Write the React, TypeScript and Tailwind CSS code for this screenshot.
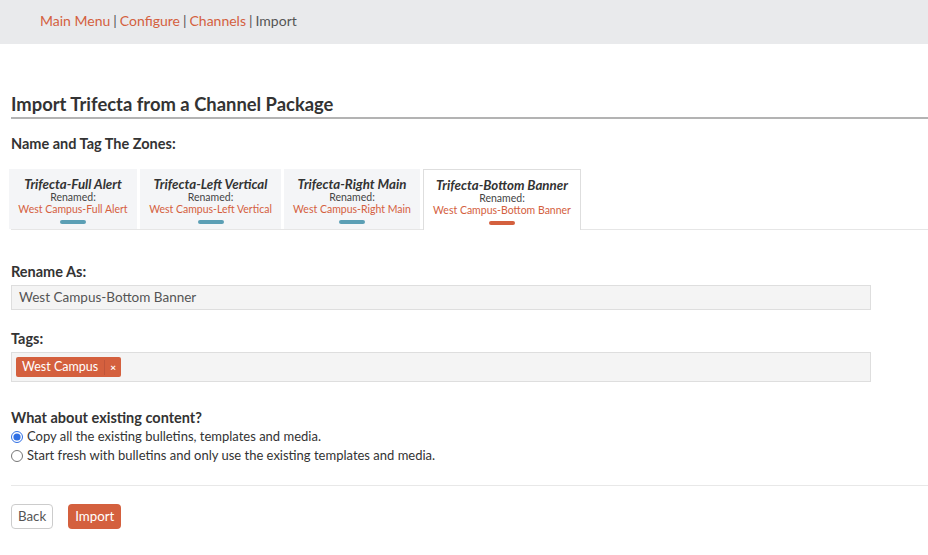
import React from "react";

const orange = "text-[#d4603e]";

function Tab({ title, renamed, active }: { title: string; renamed: string; active?: boolean }) {
  return (
    <div
      className={
        "flex flex-col items-center pt-[8px] px-[4px] whitespace-nowrap " +
        (active ? "bg-white border border-[#dedede] border-b-0 mb-[-1px] h-[61px]" : "bg-[#f4f5f7] h-[60px]")
      }
    >
      <div className="text-[13.3px] font-bold italic text-[#333] leading-[15px]">{title}</div>
      <div className="text-[10.5px] text-[#444] leading-[11px]">Renamed:</div>
      <div className={"text-[10.5px] leading-[12px] " + orange}>{renamed}</div>
      <div className={"mt-[5px] w-[26px] h-[4px] rounded-full " + (active ? "bg-[#d4603e]" : "bg-[#5b9fb5]")} />
    </div>
  );
}

export default function App() {
  return (
    <div className="w-[928px] h-[555px] bg-white text-[#333] overflow-hidden" style={{ fontFamily: "Lato, 'Open Sans', sans-serif" }}>
      <div className="h-[44px] bg-[#e9eaec] flex items-center pl-[40px] text-[14px] text-[#555] pb-[3px]">
        <span className={orange}>Main Menu</span>
        <span className="mx-[3px]">|</span>
        <span className={orange}>Configure</span>
        <span className="mx-[3px]">|</span>
        <span className={orange}>Channels</span>
        <span className="mx-[3px]">|</span>
        <span>Import</span>
      </div>
      <div className="pl-[11px]">
        <h1 className="mt-[49px] text-[18.4px] font-bold leading-[22px] text-[#333] pb-[2px] border-b-2 border-[#b3b3b3]">
          Import Trifecta from a Channel Package
        </h1>
        <div className="mt-[16px] text-[14.5px] font-bold leading-[17px]">Name and Tag The Zones:</div>
        <div className="mt-[17px] flex gap-[3px] border-b border-[#e6e6e6] pl-0">
          <div className="w-[128px] -ml-[2px]"><Tab title="Trifecta-Full Alert" renamed="West Campus-Full Alert" /></div>
          <div className="w-[141px]"><Tab title="Trifecta-Left Vertical" renamed="West Campus-Left Vertical" /></div>
          <div className="w-[136px]"><Tab title="Trifecta-Right Main" renamed="West Campus-Right Main" /></div>
          <div className="w-[158px]"><Tab title="Trifecta-Bottom Banner" renamed="West Campus-Bottom Banner" active /></div>
        </div>
        <div className="mt-[33px] text-[14.5px] font-bold leading-[17px]">Rename As:</div>
        <div className="mt-[5px] w-[860px] h-[25px] bg-[#f4f4f4] border border-[#dedede] flex items-center pl-[7px] text-[13.5px] text-[#555]">
          West Campus-Bottom Banner
        </div>
        <div className="mt-[20px] text-[14.5px] font-bold leading-[17px]">Tags:</div>
        <div className="mt-[5px] w-[860px] h-[30px] bg-[#f4f4f4] border border-[#dedede] flex items-center pl-[4px]">
          <div className="flex items-center h-[20px] bg-[#d4603e] text-white rounded-[2px] text-[12.5px]">
            <span className="px-[6px]">West Campus</span>
            <span className="border-l border-[#c0553a] px-[5px] text-[10px] font-bold">×</span>
          </div>
        </div>
        <div className="mt-[27px] text-[14.5px] font-bold leading-[17px]">What about existing content?</div>
        <label className="mt-[1px] flex items-center gap-[4px] text-[13px] h-[19px]">
          <input type="radio" name="c" defaultChecked className="m-0 w-[12px] h-[12px] accent-[#2f6fe4]" />
          Copy all the existing bulletins, templates and media.
        </label>
        <label className="flex items-center gap-[4px] text-[13px] h-[19px]">
          <input type="radio" name="c" className="m-0 w-[12px] h-[12px]" />
          Start fresh with bulletins and only use the existing templates and media.
        </label>
        <div className="mt-[20px] border-t border-[#e8e8e8]" />
        <div className="mt-[18px] flex gap-[15px]">
          <button className="h-[25px] px-[6px] border border-[#ccc] rounded-[4px] text-[13.3px] text-[#555] bg-white">Back</button>
          <button className="h-[25px] px-[7px] rounded-[4px] text-[13.3px] text-white bg-[#d4603e]">Import</button>
        </div>
      </div>
    </div>
  );
}
